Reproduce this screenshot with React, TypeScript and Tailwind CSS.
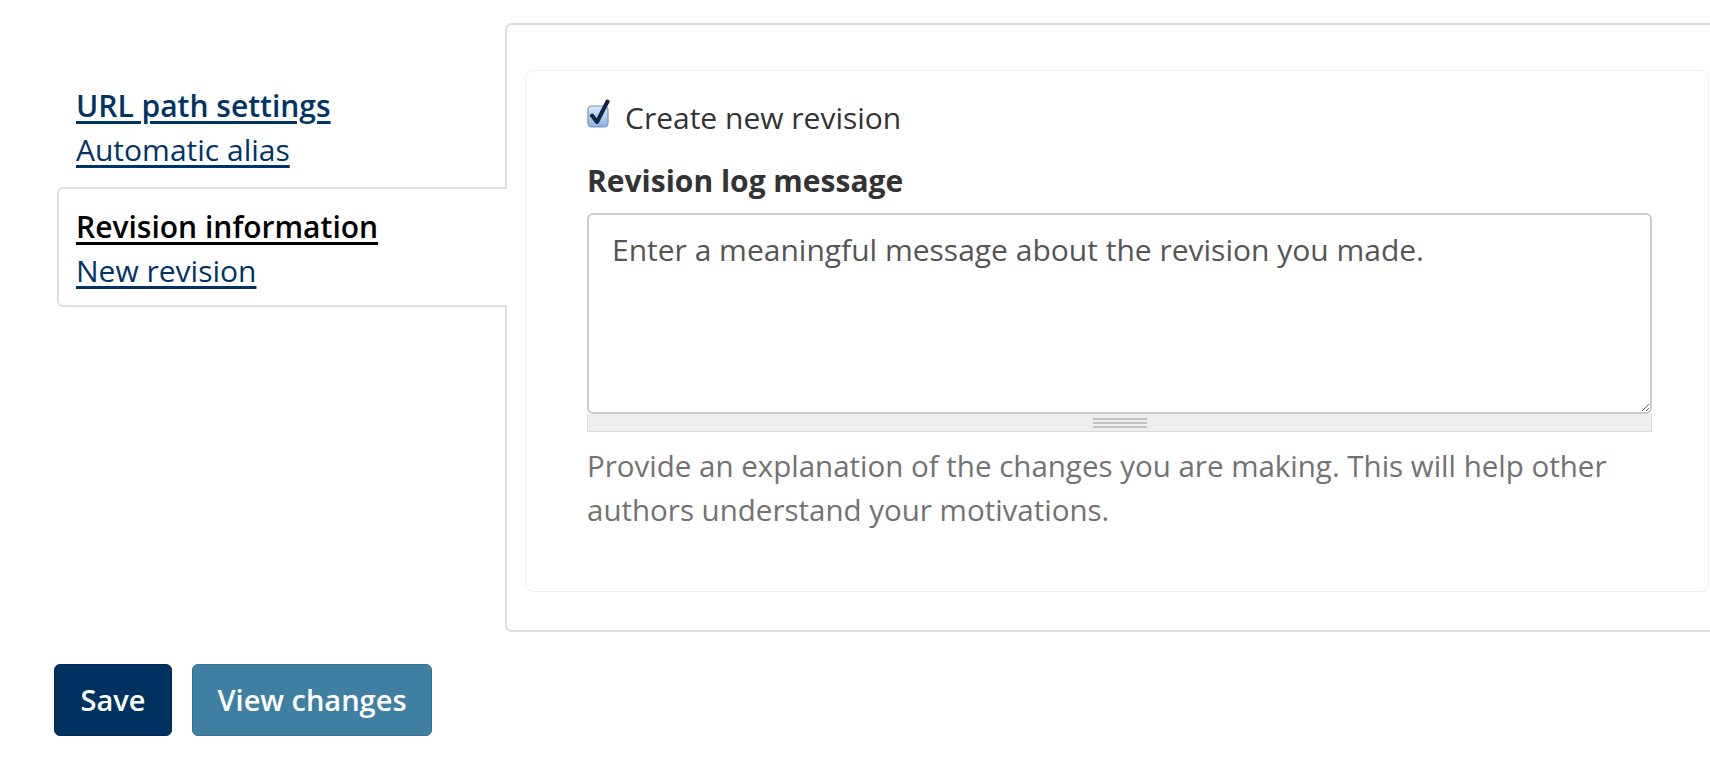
const font = { fontFamily: '"Open Sans", "Liberation Sans", sans-serif' };

const CheckIcon = () => (
  <svg width="24" height="30" viewBox="0 0 24 30" className="block">
    <defs>
      <linearGradient id="cbg" x1="0" y1="0" x2="0" y2="1">
        <stop offset="0" stopColor="#dcebfc" />
        <stop offset="1" stopColor="#86b1e6" />
      </linearGradient>
    </defs>
    <rect x="1" y="7" width="20" height="21" rx="4" fill="url(#cbg)" stroke="#7f8fa5" strokeWidth="1.2" />
    <path d="M5 16.5 L10 23 L20.5 2.5" fill="none" stroke="#0f2743" strokeWidth="4" strokeLinecap="round" strokeLinejoin="round" />
  </svg>
);

const App = () => {
  return (
    <div className="w-[1710px] h-[766px] overflow-hidden bg-white text-[#333]" style={font}>
      <div className="flex pt-[23px]">
        <div className="w-[448px] ml-[57px] shrink-0 pt-[44px]">
          <div className="px-[17px] pt-[15px] h-[120px] border-2 border-transparent">
            <div className="leading-[44px] text-[30px]">
              <a href="#" className="font-semibold underline text-[#003366] underline-offset-4">
                URL path settings
              </a>
            </div>
            <div className="leading-[44px] text-[30px]">
              <a href="#" className="underline text-[#003366] underline-offset-4">
                Automatic alias
              </a>
            </div>
          </div>
          <div className="relative z-10 mr-[-2px] h-[120px] px-[17px] pt-[16px] bg-white border-2 border-r-0 border-[#dddddd] rounded-l-[6px]">
            <div className="leading-[44px] text-[30px]">
              <a href="#" className="font-semibold underline text-black underline-offset-4">
                Revision information
              </a>
            </div>
            <div className="leading-[44px] text-[30px]">
              <a href="#" className="underline text-[#003366] underline-offset-4">
                New revision
              </a>
            </div>
          </div>
        </div>

        <div className="flex-1 mr-[-30px] h-[609px] border-2 border-[#dddddd] rounded-l-[7px] pl-[18px] pr-[29px] pt-[45px] pb-[38px]">
          <div className="h-[522px] rounded-[8px] border border-[#efefef] bg-white pl-[61px] pr-[56px] pt-[24px]">
            <label className="flex items-center gap-[14px] h-[44px]">
              <span className="-mt-[6px]">
                <CheckIcon />
              </span>
              <span className="text-[30px]">Create new revision</span>
            </label>
            <div className="mt-[20px] text-[30px] font-bold leading-[44px] text-[#333]">
              Revision log message
            </div>
            <div className="mt-[10px]">
              <textarea
                readOnly
                placeholder="Enter a meaningful message about the revision you made."
                className="block w-full h-[201px] resize-y rounded-[6px] border-2 border-[#cccccc] px-[23px] pt-[14px] text-[30px] leading-[42px] text-[#333] placeholder:text-[#555] outline-none"
              />
              <div className="flex h-[18px] items-center justify-center border border-t-0 border-[#dddddd] bg-[#eeeeee]">
                <div className="flex flex-col gap-[2px] w-[54px]">
                  <div className="h-[2px] bg-[#c4c4c4]" />
                  <div className="h-[2px] bg-[#c4c4c4]" />
                  <div className="h-[2px] bg-[#c4c4c4]" />
                </div>
              </div>
            </div>
            <p className="mt-[12px] text-[29.5px] leading-[44px] text-[#727272]">
              Provide an explanation of the changes you are making. This will help other authors understand your motivations.
            </p>
          </div>
        </div>
      </div>

      <div className="flex gap-[20px] ml-[54px] mt-[32px]">
        <button className="h-[72px] w-[118px] rounded-[6px] bg-[#003261] border border-[#00284e] text-white text-[29px] font-semibold">
          Save
        </button>
        <button className="h-[72px] w-[240px] rounded-[6px] bg-[#3f7fa2] border border-[#356f90] text-white text-[29px] font-semibold">
          View changes
        </button>
      </div>
    </div>
  );
};

export default App;
